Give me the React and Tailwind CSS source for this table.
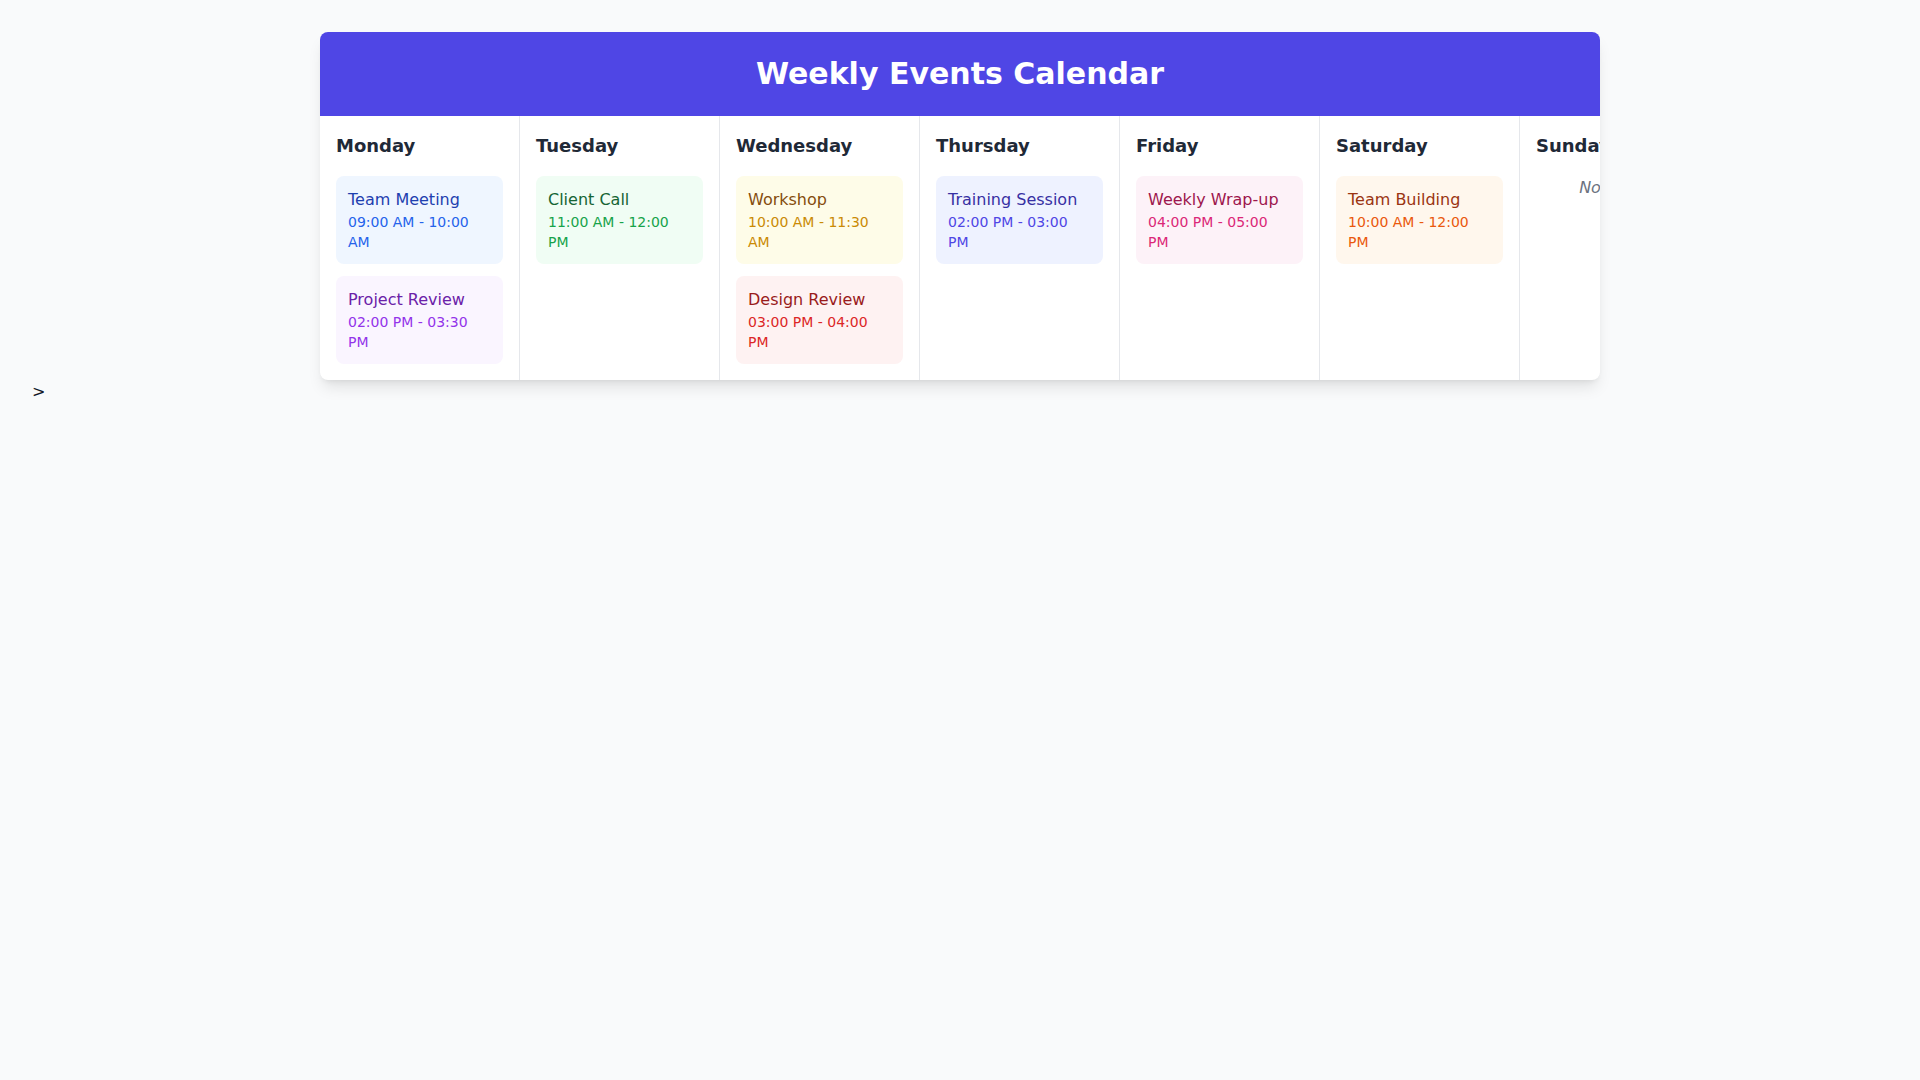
import React from 'react';

const days = [
  {
    name: 'Monday',
    events: [
      { title: 'Team Meeting', time: '09:00 AM - 10:00 AM', color: 'blue' },
      { title: 'Project Review', time: '02:00 PM - 03:30 PM', color: 'purple' },
    ],
  },
  { name: 'Tuesday', events: [{ title: 'Client Call', time: '11:00 AM - 12:00 PM', color: 'green' }] },
  {
    name: 'Wednesday',
    events: [
      { title: 'Workshop', time: '10:00 AM - 11:30 AM', color: 'yellow' },
      { title: 'Design Review', time: '03:00 PM - 04:00 PM', color: 'red' },
    ],
  },
  { name: 'Thursday', events: [{ title: 'Training Session', time: '02:00 PM - 03:00 PM', color: 'indigo' }] },
  { name: 'Friday', events: [{ title: 'Weekly Wrap-up', time: '04:00 PM - 05:00 PM', color: 'pink' }] },
  { name: 'Saturday', events: [{ title: 'Team Building', time: '10:00 AM - 12:00 PM', color: 'orange' }] },
  { name: 'Sunday', events: [] },
];

// full class names so tailwind picks them up (v3 palette hexes)
const palette = {
  blue: { box: 'bg-[#eff6ff]', title: 'text-[#1e40af]', time: 'text-[#2563eb]' },
  purple: { box: 'bg-[#faf5ff]', title: 'text-[#6b21a8]', time: 'text-[#9333ea]' },
  green: { box: 'bg-[#f0fdf4]', title: 'text-[#166534]', time: 'text-[#16a34a]' },
  yellow: { box: 'bg-[#fefce8]', title: 'text-[#854d0e]', time: 'text-[#ca8a04]' },
  red: { box: 'bg-[#fef2f2]', title: 'text-[#991b1b]', time: 'text-[#dc2626]' },
  indigo: { box: 'bg-[#eef2ff]', title: 'text-[#3730a3]', time: 'text-[#4f46e5]' },
  pink: { box: 'bg-[#fdf2f8]', title: 'text-[#9d174d]', time: 'text-[#db2777]' },
  orange: { box: 'bg-[#fff7ed]', title: 'text-[#9a3412]', time: 'text-[#ea580c]' },
};

function EventCard({ event }) {
  const c = palette[event.color];
  return (
    <div className={`${c.box} rounded-lg p-3`}>
      <div className={`${c.title} text-base leading-6`}>{event.title}</div>
      <div className={`${c.time} text-sm leading-5`}>{event.time}</div>
    </div>
  );
}

export default function App() {
  return (
    <div className="min-h-screen bg-[#f9fafb] p-8 text-[#111827]" style={{ fontFamily: '"DejaVu Sans", sans-serif' }}>
      <div className="max-w-7xl mx-auto bg-white rounded-lg shadow-lg overflow-hidden">
        <div className="bg-[#4f46e5] py-6 text-center">
          <h1 className="text-3xl font-bold text-white">Weekly Events Calendar</h1>
        </div>
        <div className="flex">
          {days.map((day) => (
            <div key={day.name} className="w-[200px] shrink-0 border-r border-[#e5e7eb] p-4">
              <h2 className="text-lg font-semibold text-[#1f2937] mb-4">{day.name}</h2>
              {day.events.length === 0 ? (
                <p className="text-base italic text-[#6b7280] text-center">No events</p>
              ) : (
                <div className="space-y-3">
                  {day.events.map((ev) => (
                    <EventCard key={ev.title} event={ev} />
                  ))}
                </div>
              )}
            </div>
          ))}
        </div>
      </div>
      &gt;
    </div>
  );
}
